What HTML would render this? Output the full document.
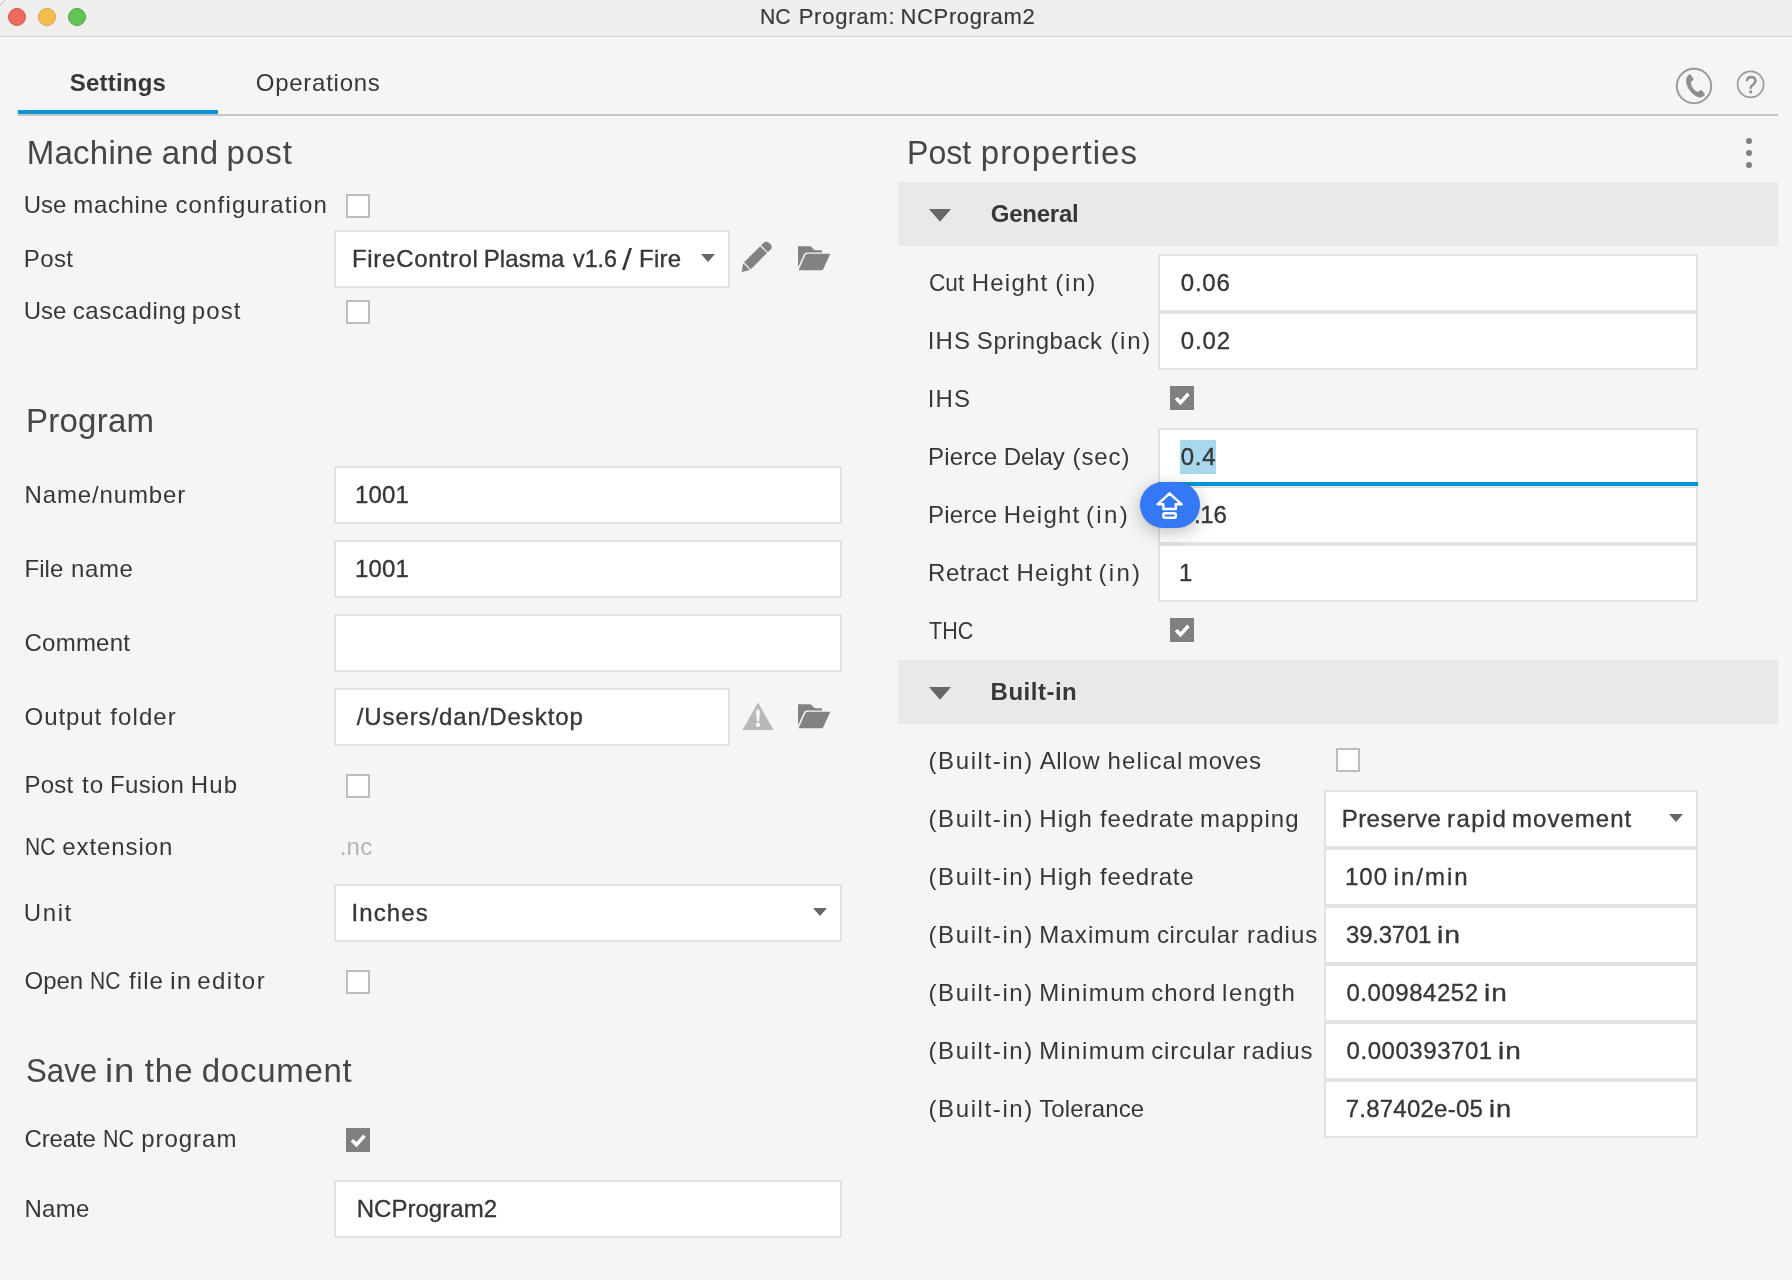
<!DOCTYPE html>
<html><head><meta charset="utf-8"><title>NC Program: NCProgram2</title>
<style>
html,body{margin:0;padding:0;}
body{width:1792px;height:1280px;background:#f5f5f5;position:relative;overflow:hidden;font-family:"Liberation Sans",sans-serif;}
#root{position:absolute;left:0;top:0;width:1792px;height:1280px;overflow:hidden;will-change:transform;}
.t{position:absolute;white-space:pre;}
</style></head><body><div id="root">
<div style="position:absolute;left:0px;top:0px;width:1792px;height:36px;background:#f0efed;"></div>
<div style="position:absolute;left:0px;top:36px;width:1792px;height:1px;background:#cfcfcf;"></div>
<div style="position:absolute;left:8px;top:8px;width:18px;height:18px;box-sizing:border-box;border-radius:50%;background:#ed6a5e;border:1px solid #d5544a;"></div>
<div style="position:absolute;left:38px;top:8px;width:18px;height:18px;box-sizing:border-box;border-radius:50%;background:#f5bf4f;border:1px solid #d9a23c;"></div>
<div style="position:absolute;left:68px;top:8px;width:18px;height:18px;box-sizing:border-box;border-radius:50%;background:#61c554;border:1px solid #4ea843;"></div>
<span class="t " style="left:759.96px;top:6.00px;font-size:22px;line-height:22px;color:#3a3a3a;transform:scaleX(0.9645);transform-origin:0 0;-webkit-text-stroke:0.2px #3a3a3a;">NC</span>
<span class="t " style="left:798.70px;top:6.00px;font-size:22px;line-height:22px;color:#3a3a3a;letter-spacing:0.763px;-webkit-text-stroke:0.2px #3a3a3a;">Program:</span>
<span class="t " style="left:900.50px;top:6.00px;font-size:22px;line-height:22px;color:#3a3a3a;letter-spacing:0.644px;-webkit-text-stroke:0.2px #3a3a3a;">NCProgram2</span>
<svg style="position:absolute;left:0;top:0" width="8" height="8" viewBox="0 0 8 8"><path d="M0,0 H5.6 A20,20 0 0 0 0,5.6 Z" fill="#f3f3f2"/><path d="M5.6,0 A20,20 0 0 0 0,5.6" fill="none" stroke="#b5b5b5" stroke-width="1"/></svg>
<span class="t " style="left:69.81px;top:71.00px;font-size:24px;line-height:24px;color:#373737;letter-spacing:0.214px;font-weight:bold;">Settings</span>
<span class="t " style="left:255.76px;top:71.00px;font-size:24px;line-height:24px;color:#373737;letter-spacing:0.745px;">Operations</span>
<div style="position:absolute;left:18px;top:114px;width:1760px;height:2px;background:#c6c6c6;"></div>
<div style="position:absolute;left:18px;top:110px;width:200px;height:4px;background:#0696d7;"></div>
<svg style="position:absolute;left:1674px;top:66px" width="40" height="40" viewBox="0 0 40 40"><circle cx="20" cy="20" r="17.2" fill="none" stroke="#9a9a9a" stroke-width="2"/><path d="M14.6,8.9 Q15.9,7.8 16.8,9 L19.4,12.6 Q20,13.6 19,14.3 L16.9,15.7 Q16.6,19 19,22.3 Q21.4,25.6 24.3,26 L26,24.2 Q27,23.5 27.9,24.4 L30.6,27.6 Q31.2,28.6 30.3,29.5 Q28.2,31.8 25.2,31.4 Q20,30.4 15.8,24.6 Q11.6,18.8 12.1,13.4 Q12.4,10.6 14.6,8.9 Z" fill="#8e8e8e"/></svg>
<svg style="position:absolute;left:1735px;top:69px" width="32" height="32" viewBox="0 0 32 32"><circle cx="15.6" cy="15.4" r="13" fill="none" stroke="#9a9a9a" stroke-width="1.7"/></svg>
<span class="t " style="left:1745.21px;top:73.00px;font-size:24px;line-height:24px;color:#8e8e8e;transform:scaleX(0.9065);transform-origin:0 0;-webkit-text-stroke:0.5px #8e8e8e;">?</span>
<span class="t " style="left:26.69px;top:136.00px;font-size:33px;line-height:33px;color:#464646;letter-spacing:0.265px;">Machine</span>
<span class="t " style="left:161.80px;top:136.00px;font-size:33px;line-height:33px;color:#464646;letter-spacing:0.660px;">and</span>
<span class="t " style="left:226.57px;top:136.00px;font-size:33px;line-height:33px;color:#464646;letter-spacing:1.031px;">post</span>
<span class="t " style="left:23.85px;top:193.00px;font-size:24px;line-height:24px;color:#373737;letter-spacing:-0.081px;">Use</span>
<span class="t " style="left:73.36px;top:193.00px;font-size:24px;line-height:24px;color:#373737;letter-spacing:0.633px;">machine</span>
<span class="t " style="left:175.43px;top:193.00px;font-size:24px;line-height:24px;color:#373737;letter-spacing:1.167px;">configuration</span>
<div style="position:absolute;left:346px;top:194px;width:24px;height:24px;box-sizing:border-box;background:#fff;border:2px solid #bdbdbd;"></div>
<span class="t " style="left:23.73px;top:247.00px;font-size:24px;line-height:24px;color:#373737;letter-spacing:0.407px;">Post</span>
<div style="position:absolute;left:334px;top:230px;width:396px;height:58px;box-sizing:border-box;background:#fff;border:2px solid #e3e3e3;"></div>
<span class="t " style="left:351.93px;top:247.00px;font-size:24px;line-height:24px;color:#373737;letter-spacing:0.718px;-webkit-text-stroke:0.35px #373737;">FireControl</span>
<span class="t " style="left:483.73px;top:247.00px;font-size:24px;line-height:24px;color:#373737;letter-spacing:0.128px;-webkit-text-stroke:0.35px #373737;">Plasma</span>
<span class="t " style="left:572.62px;top:247.00px;font-size:24px;line-height:24px;color:#373737;transform:scaleX(0.9700);transform-origin:0 0;-webkit-text-stroke:0.35px #373737;">v1.6</span>
<span class="t " style="left:639.03px;top:247.00px;font-size:24px;line-height:24px;color:#373737;letter-spacing:0.268px;-webkit-text-stroke:0.35px #373737;">Fire</span>
<span class="t " style="left:622.30px;top:245.00px;font-size:30px;line-height:30px;color:#373737;transform:scaleX(1.1998);transform-origin:0 0;">/</span>
<svg style="position:absolute;left:701px;top:254px" width="14" height="8" viewBox="0 0 14 8"><polygon points="0,0 14,0 7.0,8" fill="#666"/></svg>
<svg style="position:absolute;left:741px;top:241px" width="32" height="32" viewBox="0 0 32 32"><g fill="#828282"><path d="M0.7,31 L2.18,22.18 L9.03,29.03 Z"/><path d="M3.03,21.33 L19.18,5.18 L26.03,12.03 L9.88,28.18 Z"/><path d="M20.03,4.33 L22.2,2.2 Q25.6,-0.9 29,2.6 Q32.4,6 29.2,9 L26.88,11.18 Z"/></g></svg>
<svg style="position:absolute;left:798px;top:246px" width="33" height="25" viewBox="0 0 33 25"><path d="M0,0.3 H11.5 Q13,0.3 14,1.6 Q15.5,4.2 17.5,4.2 H24 V6.5 H8.6 Q6.8,6.5 6.1,8 L0,21.6 Z" fill="#828282"/><path d="M9.2,7.8 H32.3 L25.2,23.2 Q24.6,24.3 23.4,24.3 H0.6 L7.2,9.3 Q7.8,8 9.2,8 Z" fill="#828282"/></svg>
<span class="t " style="left:23.85px;top:299.00px;font-size:24px;line-height:24px;color:#373737;letter-spacing:-0.081px;">Use</span>
<span class="t " style="left:72.68px;top:299.00px;font-size:24px;line-height:24px;color:#373737;letter-spacing:0.637px;">cascading</span>
<span class="t " style="left:191.65px;top:299.00px;font-size:24px;line-height:24px;color:#373737;letter-spacing:1.153px;">post</span>
<div style="position:absolute;left:346px;top:300px;width:24px;height:24px;box-sizing:border-box;background:#fff;border:2px solid #bdbdbd;"></div>
<span class="t " style="left:25.99px;top:404.00px;font-size:33px;line-height:33px;color:#464646;letter-spacing:0.241px;">Program</span>
<span class="t " style="left:24.48px;top:483.00px;font-size:24px;line-height:24px;color:#373737;letter-spacing:0.865px;">Name/number</span>
<div style="position:absolute;left:334px;top:466px;width:508px;height:58px;box-sizing:border-box;background:#fff;border:2px solid #e3e3e3;"></div>
<span class="t " style="left:355.12px;top:483.00px;font-size:24px;line-height:24px;color:#373737;letter-spacing:0.153px;-webkit-text-stroke:0.35px #373737;">1001</span>
<span class="t " style="left:24.48px;top:557.00px;font-size:24px;line-height:24px;color:#373737;letter-spacing:0.071px;">File</span>
<span class="t " style="left:71.11px;top:557.00px;font-size:24px;line-height:24px;color:#373737;letter-spacing:0.575px;">name</span>
<div style="position:absolute;left:334px;top:540px;width:508px;height:58px;box-sizing:border-box;background:#fff;border:2px solid #e3e3e3;"></div>
<span class="t " style="left:355.12px;top:557.00px;font-size:24px;line-height:24px;color:#373737;letter-spacing:0.153px;-webkit-text-stroke:0.35px #373737;">1001</span>
<span class="t " style="left:24.48px;top:631.00px;font-size:24px;line-height:24px;color:#373737;letter-spacing:0.245px;">Comment</span>
<div style="position:absolute;left:334px;top:614px;width:508px;height:58px;box-sizing:border-box;background:#fff;border:2px solid #e3e3e3;"></div>
<span class="t " style="left:24.56px;top:705.00px;font-size:24px;line-height:24px;color:#373737;letter-spacing:0.923px;">Output</span>
<span class="t " style="left:110.36px;top:705.00px;font-size:24px;line-height:24px;color:#373737;letter-spacing:1.061px;">folder</span>
<div style="position:absolute;left:334px;top:688px;width:396px;height:58px;box-sizing:border-box;background:#fff;border:2px solid #e3e3e3;"></div>
<span class="t " style="left:356.70px;top:705.00px;font-size:24px;line-height:24px;color:#373737;letter-spacing:0.903px;-webkit-text-stroke:0.35px #373737;">/Users/dan/Desktop</span>
<svg style="position:absolute;left:742px;top:702px" width="32" height="29" viewBox="0 0 32 29"><path d="M16,0.6 L31.6,28 H0.4 Z" fill="#b9b9b9"/><path d="M14.1,9.4 Q14,7.6 16,7.6 Q18,7.6 17.9,9.4 L17.3,18.6 Q17.2,19.6 16,19.6 Q14.8,19.6 14.7,18.6 Z" fill="#f8f8f8"/><circle cx="16" cy="22.7" r="2.2" fill="#f8f8f8"/></svg>
<svg style="position:absolute;left:798px;top:704px" width="33" height="25" viewBox="0 0 33 25"><path d="M0,0.3 H11.5 Q13,0.3 14,1.6 Q15.5,4.2 17.5,4.2 H24 V6.5 H8.6 Q6.8,6.5 6.1,8 L0,21.6 Z" fill="#828282"/><path d="M9.2,7.8 H32.3 L25.2,23.2 Q24.6,24.3 23.4,24.3 H0.6 L7.2,9.3 Q7.8,8 9.2,8 Z" fill="#828282"/></svg>
<span class="t " style="left:24.48px;top:773.00px;font-size:24px;line-height:24px;color:#373737;letter-spacing:0.240px;">Post</span>
<span class="t " style="left:81.58px;top:773.00px;font-size:24px;line-height:24px;color:#373737;letter-spacing:0.989px;transform:scaleX(1.0110);transform-origin:0 0;">to</span>
<span class="t " style="left:109.98px;top:773.00px;font-size:24px;line-height:24px;color:#373737;letter-spacing:0.368px;">Fusion</span>
<span class="t " style="left:190.73px;top:773.00px;font-size:24px;line-height:24px;color:#373737;letter-spacing:1.150px;">Hub</span>
<div style="position:absolute;left:346px;top:774px;width:24px;height:24px;box-sizing:border-box;background:#fff;border:2px solid #bdbdbd;"></div>
<span class="t " style="left:24.72px;top:835.00px;font-size:24px;line-height:24px;color:#373737;transform:scaleX(0.8763);transform-origin:0 0;">NC</span>
<span class="t " style="left:62.18px;top:835.00px;font-size:24px;line-height:24px;color:#373737;letter-spacing:0.930px;">extension</span>
<span class="t " style="left:339.76px;top:835.00px;font-size:24px;line-height:24px;color:#b4b4b4;letter-spacing:0.204px;">.nc</span>
<span class="t " style="left:23.85px;top:901.00px;font-size:24px;line-height:24px;color:#373737;letter-spacing:1.566px;">Unit</span>
<div style="position:absolute;left:334px;top:884px;width:508px;height:58px;box-sizing:border-box;background:#fff;border:2px solid #e3e3e3;"></div>
<span class="t " style="left:351.49px;top:901.00px;font-size:24px;line-height:24px;color:#373737;letter-spacing:1.094px;-webkit-text-stroke:0.35px #373737;">Inches</span>
<svg style="position:absolute;left:813px;top:908px" width="14" height="8" viewBox="0 0 14 8"><polygon points="0,0 14,0 7.0,8" fill="#666"/></svg>
<span class="t " style="left:24.56px;top:969.00px;font-size:24px;line-height:24px;color:#373737;letter-spacing:-0.055px;">Open</span>
<span class="t " style="left:90.22px;top:969.00px;font-size:24px;line-height:24px;color:#373737;transform:scaleX(0.8763);transform-origin:0 0;">NC</span>
<span class="t " style="left:129.11px;top:969.00px;font-size:24px;line-height:24px;color:#373737;letter-spacing:1.026px;">file</span>
<span class="t " style="left:169.73px;top:969.00px;font-size:24px;line-height:24px;color:#373737;letter-spacing:0.935px;transform:scaleX(1.0699);transform-origin:0 0;">in</span>
<span class="t " style="left:197.18px;top:969.00px;font-size:24px;line-height:24px;color:#373737;letter-spacing:1.497px;">editor</span>
<div style="position:absolute;left:346px;top:970px;width:24px;height:24px;box-sizing:border-box;background:#fff;border:2px solid #bdbdbd;"></div>
<span class="t " style="left:26.28px;top:1054.00px;font-size:33px;line-height:33px;color:#464646;transform:scaleX(0.9460);transform-origin:0 0;">Save</span>
<span class="t " style="left:105.26px;top:1054.00px;font-size:33px;line-height:33px;color:#464646;letter-spacing:0.904px;transform:scaleX(1.1062);transform-origin:0 0;">in</span>
<span class="t " style="left:144.70px;top:1054.00px;font-size:33px;line-height:33px;color:#464646;letter-spacing:0.971px;">the</span>
<span class="t " style="left:201.81px;top:1054.00px;font-size:33px;line-height:33px;color:#464646;letter-spacing:0.722px;">document</span>
<span class="t " style="left:24.48px;top:1127.00px;font-size:24px;line-height:24px;color:#373737;letter-spacing:-0.130px;">Create</span>
<span class="t " style="left:102.69px;top:1127.00px;font-size:24px;line-height:24px;color:#373737;transform:scaleX(0.8920);transform-origin:0 0;">NC</span>
<span class="t " style="left:141.15px;top:1127.00px;font-size:24px;line-height:24px;color:#373737;letter-spacing:0.977px;">program</span>
<div style="position:absolute;left:346px;top:1128px;width:24px;height:24px;background:#808080;"><svg width="24" height="24" viewBox="0 0 24 24" style="position:absolute;left:0;top:0"><polygon points="4.7,13.4 7.4,11 10.5,13.9 17.2,6.5 19.8,9 10.5,19.2" fill="#fff"/></svg></div>
<span class="t " style="left:24.48px;top:1197.00px;font-size:24px;line-height:24px;color:#373737;letter-spacing:0.289px;">Name</span>
<div style="position:absolute;left:334px;top:1180px;width:508px;height:58px;box-sizing:border-box;background:#fff;border:2px solid #e3e3e3;"></div>
<span class="t " style="left:356.73px;top:1197.00px;font-size:24px;line-height:24px;color:#373737;letter-spacing:0.026px;-webkit-text-stroke:0.35px #373737;">NCProgram2</span>
<span class="t " style="left:906.87px;top:136.00px;font-size:33px;line-height:33px;color:#464646;transform:scaleX(0.9717);transform-origin:0 0;">Post</span>
<span class="t " style="left:980.82px;top:136.00px;font-size:33px;line-height:33px;color:#464646;letter-spacing:1.047px;">properties</span>
<div style="position:absolute;left:1746px;top:137.7px;width:6px;height:6px;border-radius:50%;background:#808080;"></div>
<div style="position:absolute;left:1746px;top:149.8px;width:6px;height:6px;border-radius:50%;background:#808080;"></div>
<div style="position:absolute;left:1746px;top:162.2px;width:6px;height:6px;border-radius:50%;background:#808080;"></div>
<div style="position:absolute;left:898px;top:182px;width:880px;height:64px;background:#e9e9e9;"></div>
<svg style="position:absolute;left:929px;top:209.4px" width="22" height="12.7" viewBox="0 0 22 12.7"><polygon points="0,0 22,0 11.0,12.7" fill="#666"/></svg>
<span class="t " style="left:990.72px;top:202.00px;font-size:24px;line-height:24px;color:#373737;letter-spacing:-0.224px;font-weight:bold;">General</span>
<div style="position:absolute;left:1158px;top:254px;width:540px;height:58px;box-sizing:border-box;background:#fff;border:2px solid #e3e3e3;"></div>
<div style="position:absolute;left:1158px;top:312px;width:540px;height:58px;box-sizing:border-box;background:#fff;border:2px solid #e3e3e3;"></div>
<div style="position:absolute;left:1158px;top:428px;width:540px;height:58px;box-sizing:border-box;background:#fff;border:2px solid #e3e3e3;"></div>
<div style="position:absolute;left:1158px;top:486px;width:540px;height:58px;box-sizing:border-box;background:#fff;border:2px solid #e3e3e3;"></div>
<div style="position:absolute;left:1158px;top:544px;width:540px;height:58px;box-sizing:border-box;background:#fff;border:2px solid #e3e3e3;"></div>
<span class="t " style="left:928.80px;top:271.00px;font-size:24px;line-height:24px;color:#373737;transform:scaleX(0.9415);transform-origin:0 0;">Cut</span>
<span class="t " style="left:971.73px;top:271.00px;font-size:24px;line-height:24px;color:#373737;letter-spacing:1.224px;">Height</span>
<span class="t " style="left:1055.21px;top:271.00px;font-size:24px;line-height:24px;color:#373737;letter-spacing:1.804px;">(in)</span>
<span class="t " style="left:1180.76px;top:271.00px;font-size:24px;line-height:24px;color:#373737;letter-spacing:0.794px;-webkit-text-stroke:0.35px #373737;">0.06</span>
<span class="t " style="left:927.74px;top:329.00px;font-size:24px;line-height:24px;color:#373737;letter-spacing:1.079px;">IHS</span>
<span class="t " style="left:976.86px;top:329.00px;font-size:24px;line-height:24px;color:#373737;letter-spacing:0.565px;">Springback</span>
<span class="t " style="left:1110.21px;top:329.00px;font-size:24px;line-height:24px;color:#373737;letter-spacing:1.804px;">(in)</span>
<span class="t " style="left:1180.76px;top:329.00px;font-size:24px;line-height:24px;color:#373737;letter-spacing:0.845px;-webkit-text-stroke:0.35px #373737;">0.02</span>
<span class="t " style="left:927.74px;top:387.00px;font-size:24px;line-height:24px;color:#373737;letter-spacing:1.079px;">IHS</span>
<div style="position:absolute;left:1170px;top:386px;width:24px;height:24px;background:#808080;"><svg width="24" height="24" viewBox="0 0 24 24" style="position:absolute;left:0;top:0"><polygon points="4.7,13.4 7.4,11 10.5,13.9 17.2,6.5 19.8,9 10.5,19.2" fill="#fff"/></svg></div>
<span class="t " style="left:928.03px;top:445.00px;font-size:24px;line-height:24px;color:#373737;letter-spacing:0.222px;">Pierce</span>
<span class="t " style="left:1003.73px;top:445.00px;font-size:24px;line-height:24px;color:#373737;letter-spacing:-0.111px;">Delay</span>
<span class="t " style="left:1072.51px;top:445.00px;font-size:24px;line-height:24px;color:#373737;letter-spacing:0.911px;">(sec)</span>
<div style="position:absolute;left:1180px;top:440px;width:36px;height:34px;background:#a9d8ee;"></div>
<div style="position:absolute;left:1158px;top:482px;width:540px;height:4px;background:#0696d7;"></div>
<span class="t " style="left:1180.76px;top:445.00px;font-size:24px;line-height:24px;color:#373737;letter-spacing:0.689px;-webkit-text-stroke:0.35px #373737;">0.4</span>
<span class="t " style="left:928.03px;top:503.00px;font-size:24px;line-height:24px;color:#373737;letter-spacing:0.222px;">Pierce</span>
<span class="t " style="left:1003.73px;top:503.00px;font-size:24px;line-height:24px;color:#373737;letter-spacing:1.234px;">Height</span>
<span class="t " style="left:1085.91px;top:503.00px;font-size:24px;line-height:24px;color:#373737;letter-spacing:2.371px;">(in)</span>
<span class="t " style="left:1180.76px;top:503.00px;font-size:24px;line-height:24px;color:#373737;letter-spacing:-0.206px;-webkit-text-stroke:0.35px #373737;">0.16</span>
<span class="t " style="left:928.03px;top:561.00px;font-size:24px;line-height:24px;color:#373737;letter-spacing:0.532px;">Retract</span>
<span class="t " style="left:1016.43px;top:561.00px;font-size:24px;line-height:24px;color:#373737;letter-spacing:1.154px;">Height</span>
<span class="t " style="left:1098.61px;top:561.00px;font-size:24px;line-height:24px;color:#373737;letter-spacing:2.271px;">(in)</span>
<span class="t " style="left:1178.98px;top:561.00px;font-size:24px;line-height:24px;color:#373737;transform:scaleX(0.9954);transform-origin:0 0;-webkit-text-stroke:0.35px #373737;">1</span>
<span class="t " style="left:928.62px;top:619.00px;font-size:24px;line-height:24px;color:#373737;transform:scaleX(0.8962);transform-origin:0 0;">THC</span>
<div style="position:absolute;left:1170px;top:618px;width:24px;height:24px;background:#808080;"><svg width="24" height="24" viewBox="0 0 24 24" style="position:absolute;left:0;top:0"><polygon points="4.7,13.4 7.4,11 10.5,13.9 17.2,6.5 19.8,9 10.5,19.2" fill="#fff"/></svg></div>
<div style="position:absolute;left:1140px;top:482px;width:60px;height:46px;border-radius:23px;background:#3478f6;box-shadow:0 5px 18px rgba(0,0,0,0.24),0 0 3px rgba(0,0,0,0.10);"><svg width="60" height="46" viewBox="0 0 60 46" style="position:absolute;left:0;top:0"><g fill="none" stroke="#fff" stroke-width="2.5" stroke-linejoin="round"><path d="M29.6,11.3 L41.6,22.3 H35.8 V27 H23.4 V22.3 H17.6 Z"/><rect x="23.4" y="31.35" width="12.4" height="4.3" rx="1.5"/></g></svg></div>
<div style="position:absolute;left:898px;top:660px;width:880px;height:64px;background:#e9e9e9;"></div>
<svg style="position:absolute;left:929px;top:687.4px" width="22" height="12.7" viewBox="0 0 22 12.7"><polygon points="0,0 22,0 11.0,12.7" fill="#666"/></svg>
<span class="t " style="left:990.59px;top:680.00px;font-size:24px;line-height:24px;color:#373737;letter-spacing:0.508px;font-weight:bold;">Built-in</span>
<div style="position:absolute;left:1324px;top:790px;width:374px;height:58px;box-sizing:border-box;background:#fff;border:2px solid #e3e3e3;"></div>
<div style="position:absolute;left:1324px;top:848px;width:374px;height:58px;box-sizing:border-box;background:#fff;border:2px solid #e3e3e3;"></div>
<div style="position:absolute;left:1324px;top:906px;width:374px;height:58px;box-sizing:border-box;background:#fff;border:2px solid #e3e3e3;"></div>
<div style="position:absolute;left:1324px;top:964px;width:374px;height:58px;box-sizing:border-box;background:#fff;border:2px solid #e3e3e3;"></div>
<div style="position:absolute;left:1324px;top:1022px;width:374px;height:58px;box-sizing:border-box;background:#fff;border:2px solid #e3e3e3;"></div>
<div style="position:absolute;left:1324px;top:1080px;width:374px;height:58px;box-sizing:border-box;background:#fff;border:2px solid #e3e3e3;"></div>
<span class="t " style="left:928.46px;top:749.00px;font-size:24px;line-height:24px;color:#373737;letter-spacing:1.609px;">(Built-in)</span>
<span class="t " style="left:1039.65px;top:749.00px;font-size:24px;line-height:24px;color:#373737;letter-spacing:0.622px;">Allow</span>
<span class="t " style="left:1107.54px;top:749.00px;font-size:24px;line-height:24px;color:#373737;letter-spacing:1.138px;">helical</span>
<span class="t " style="left:1188.11px;top:749.00px;font-size:24px;line-height:24px;color:#373737;letter-spacing:0.531px;">moves</span>
<div style="position:absolute;left:1336px;top:748px;width:24px;height:24px;box-sizing:border-box;background:#fff;border:2px solid #bdbdbd;"></div>
<span class="t " style="left:928.46px;top:807.00px;font-size:24px;line-height:24px;color:#373737;letter-spacing:1.609px;">(Built-in)</span>
<span class="t " style="left:1039.23px;top:807.00px;font-size:24px;line-height:24px;color:#373737;letter-spacing:1.089px;">High</span>
<span class="t " style="left:1100.11px;top:807.00px;font-size:24px;line-height:24px;color:#373737;letter-spacing:0.777px;">feedrate</span>
<span class="t " style="left:1200.11px;top:807.00px;font-size:24px;line-height:24px;color:#373737;letter-spacing:1.071px;">mapping</span>
<span class="t " style="left:1341.73px;top:807.00px;font-size:24px;line-height:24px;color:#373737;letter-spacing:0.443px;-webkit-text-stroke:0.35px #373737;">Preserve</span>
<span class="t " style="left:1447.11px;top:807.00px;font-size:24px;line-height:24px;color:#373737;letter-spacing:1.343px;-webkit-text-stroke:0.35px #373737;">rapid</span>
<span class="t " style="left:1512.11px;top:807.00px;font-size:24px;line-height:24px;color:#373737;letter-spacing:1.011px;-webkit-text-stroke:0.35px #373737;">movement</span>
<span class="t " style="left:928.46px;top:865.00px;font-size:24px;line-height:24px;color:#373737;letter-spacing:1.609px;">(Built-in)</span>
<span class="t " style="left:1039.23px;top:865.00px;font-size:24px;line-height:24px;color:#373737;letter-spacing:1.089px;">High</span>
<span class="t " style="left:1100.11px;top:865.00px;font-size:24px;line-height:24px;color:#373737;letter-spacing:0.777px;">feedrate</span>
<span class="t " style="left:1345.12px;top:865.00px;font-size:24px;line-height:24px;color:#373737;letter-spacing:0.911px;-webkit-text-stroke:0.35px #373737;">100</span>
<span class="t " style="left:1393.59px;top:865.00px;font-size:24px;line-height:24px;color:#373737;letter-spacing:1.999px;-webkit-text-stroke:0.35px #373737;">in/min</span>
<span class="t " style="left:928.46px;top:923.00px;font-size:24px;line-height:24px;color:#373737;letter-spacing:1.609px;">(Built-in)</span>
<span class="t " style="left:1039.23px;top:923.00px;font-size:24px;line-height:24px;color:#373737;letter-spacing:1.108px;">Maximum</span>
<span class="t " style="left:1156.93px;top:923.00px;font-size:24px;line-height:24px;color:#373737;letter-spacing:0.632px;">circular</span>
<span class="t " style="left:1247.11px;top:923.00px;font-size:24px;line-height:24px;color:#373737;letter-spacing:0.939px;">radius</span>
<span class="t " style="left:1346.04px;top:923.00px;font-size:24px;line-height:24px;color:#373737;letter-spacing:-0.220px;-webkit-text-stroke:0.35px #373737;">39.3701</span>
<span class="t " style="left:1436.81px;top:923.00px;font-size:24px;line-height:24px;color:#373737;letter-spacing:0.883px;transform:scaleX(1.1800);transform-origin:0 0;-webkit-text-stroke:0.35px #373737;">in</span>
<span class="t " style="left:928.46px;top:981.00px;font-size:24px;line-height:24px;color:#373737;letter-spacing:1.609px;">(Built-in)</span>
<span class="t " style="left:1039.23px;top:981.00px;font-size:24px;line-height:24px;color:#373737;letter-spacing:1.386px;">Minimum</span>
<span class="t " style="left:1151.18px;top:981.00px;font-size:24px;line-height:24px;color:#373737;letter-spacing:1.033px;">chord</span>
<span class="t " style="left:1222.08px;top:981.00px;font-size:24px;line-height:24px;color:#373737;letter-spacing:1.477px;">length</span>
<span class="t " style="left:1346.51px;top:981.00px;font-size:24px;line-height:24px;color:#373737;letter-spacing:0.522px;-webkit-text-stroke:0.35px #373737;">0.00984252</span>
<span class="t " style="left:1484.33px;top:981.00px;font-size:24px;line-height:24px;color:#373737;letter-spacing:0.857px;transform:scaleX(1.1666);transform-origin:0 0;-webkit-text-stroke:0.35px #373737;">in</span>
<span class="t " style="left:928.46px;top:1039.00px;font-size:24px;line-height:24px;color:#373737;letter-spacing:1.609px;">(Built-in)</span>
<span class="t " style="left:1039.23px;top:1039.00px;font-size:24px;line-height:24px;color:#373737;letter-spacing:1.386px;">Minimum</span>
<span class="t " style="left:1151.18px;top:1039.00px;font-size:24px;line-height:24px;color:#373737;letter-spacing:0.918px;">circular</span>
<span class="t " style="left:1242.61px;top:1039.00px;font-size:24px;line-height:24px;color:#373737;letter-spacing:0.889px;">radius</span>
<span class="t " style="left:1346.51px;top:1039.00px;font-size:24px;line-height:24px;color:#373737;letter-spacing:0.556px;-webkit-text-stroke:0.35px #373737;">0.000393701</span>
<span class="t " style="left:1498.33px;top:1039.00px;font-size:24px;line-height:24px;color:#373737;letter-spacing:0.857px;transform:scaleX(1.1666);transform-origin:0 0;-webkit-text-stroke:0.35px #373737;">in</span>
<span class="t " style="left:928.46px;top:1097.00px;font-size:24px;line-height:24px;color:#373737;letter-spacing:1.609px;">(Built-in)</span>
<span class="t " style="left:1039.16px;top:1097.00px;font-size:24px;line-height:24px;color:#373737;letter-spacing:0.123px;">Tolerance</span>
<span class="t " style="left:1345.72px;top:1097.00px;font-size:24px;line-height:24px;color:#373737;letter-spacing:0.230px;-webkit-text-stroke:0.35px #373737;">7.87402e-05</span>
<span class="t " style="left:1488.88px;top:1097.00px;font-size:24px;line-height:24px;color:#373737;letter-spacing:0.882px;transform:scaleX(1.1343);transform-origin:0 0;-webkit-text-stroke:0.35px #373737;">in</span>
<svg style="position:absolute;left:1669px;top:814px" width="14" height="8" viewBox="0 0 14 8"><polygon points="0,0 14,0 7.0,8" fill="#666"/></svg>
</div></body></html>
